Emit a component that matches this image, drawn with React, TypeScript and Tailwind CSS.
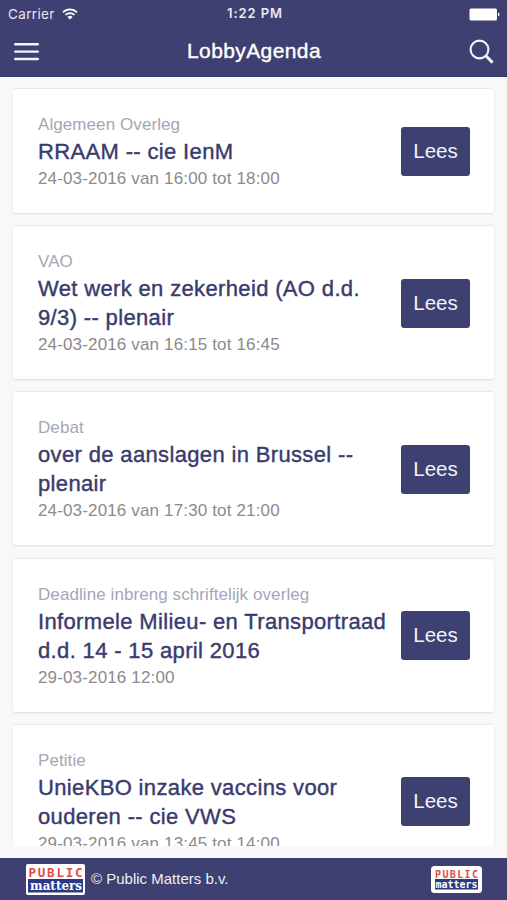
interface AgendaItem {
  kind: string;
  title: string[];
  date: string;
}

const ITEMS: AgendaItem[] = [
  { kind: 'Algemeen Overleg', title: ['RRAAM -- cie IenM'], date: '24-03-2016 van 16:00 tot 18:00' },
  { kind: 'VAO', title: ['Wet werk en zekerheid (AO d.d.', '9/3) -- plenair'], date: '24-03-2016 van 16:15 tot 16:45' },
  { kind: 'Debat', title: ['over de aanslagen in Brussel --', 'plenair'], date: '24-03-2016 van 17:30 tot 21:00' },
  { kind: 'Deadline inbreng schriftelijk overleg', title: ['Informele Milieu- en Transportraad', 'd.d. 14 - 15 april 2016'], date: '29-03-2016 12:00' },
  { kind: 'Petitie', title: ['UnieKBO inzake vaccins voor', 'ouderen -- cie VWS'], date: '29-03-2016 van 13:45 tot 14:00' },
];

function StatusBar() {
  return (
    <div className="grid h-[28px] grid-cols-3 items-center pl-2 pr-[7px] font-['Inter','Liberation_Sans',sans-serif] text-[13.5px] text-[#e8e9f2]">
      <div className="flex items-center gap-[7px]">
        <span className="tracking-[0.35px]">Carrier</span>
        <svg className="h-[12px] w-[16px]" viewBox="0 0 16 12" fill="none" stroke="#fff" strokeWidth="1.7">
          <path d="M1 4.3a10 10 0 0 1 14 0" />
          <path d="M3.5 7a6.4 6.4 0 0 1 9 0" />
          <path d="M8 11.6 5.4 9a3.7 3.7 0 0 1 5.2 0z" fill="#fff" stroke="none" />
        </svg>
      </div>
      <span className="ml-[5px] text-center text-[13px] font-semibold tracking-[0.9px]">
        <span className="-ml-[3px]">1:22 PM</span>
      </span>
      <svg className="h-[13px] w-[31px] justify-self-end" viewBox="0 0 31 13" fill="#fff">
        <rect x="0.5" y="0.5" width="27.5" height="12" rx="1.5" />
        <path d="M29 4.5q1.5.6 1.5 2t-1.5 2z" />
      </svg>
    </div>
  );
}

function Header() {
  return (
    <header className="h-[77px] shrink-0 border-b border-[#353865] bg-[#3d4070] text-white">
      <StatusBar />
      <div className="flex h-[46px] items-center justify-between pl-[14px] pr-[13px]">
        <button aria-label="Menu">
          <svg className="h-[19px] w-[25px]" viewBox="0 0 25 19" stroke="#f4f5fa" strokeWidth="2.4" strokeLinecap="round">
            <path d="M1.2 2.2h22.6M1.2 9.6h22.6M1.2 17h22.6" />
          </svg>
        </button>
        <h1 className="text-[21px] tracking-[0.4px] [-webkit-text-stroke:0.4px_currentColor]">LobbyAgenda</h1>
        <button aria-label="Zoeken">
          <svg className="h-[25px] w-[25px]" viewBox="0 0 25 25" fill="none" stroke="#f4f5fa">
            <circle cx="10.5" cy="10.5" r="8.9" strokeWidth="2.1" />
            <path d="M16.8 16.8 23.6 23.6" strokeWidth="2.9" />
          </svg>
        </button>
      </div>
    </header>
  );
}

function AgendaCard({ item }: { item: AgendaItem }) {
  return (
    <article className="flex shrink-0 items-start justify-between rounded-[3px] bg-white pb-[22px] pl-[25px] pr-6 pt-6 shadow-[0_1px_2px_#dedee0,0_-1px_1px_#e8e8e8]">
      <div className="whitespace-nowrap">
        <p className="text-[17px] leading-6 tracking-[0.08px] text-[#a5a6b7]">{item.kind}</p>
        <h2 className="text-[22px] leading-[29px] tracking-[0.35px] text-[#393b6c] [-webkit-text-stroke:0.4px_currentColor]">
          {item.title.map((line) => (
            <span key={line} className="block">{line}</span>
          ))}
        </h2>
        <p className="text-[17px] leading-[25px] tracking-[0.15px] text-[#8b8b8b]">{item.date}</p>
      </div>
      <button className="-mt-px h-[49px] w-[69px] shrink-0 self-center rounded-[3px] bg-[#3d4070] text-[20.5px] text-[#f3f3f8]">Lees</button>
    </article>
  );
}

function LogoLarge() {
  return (
    <svg className="h-[31px] w-[59px]" viewBox="0 0 59 31">
      <rect width="59" height="31" rx="2" fill="#fff" />
      <rect x="2" y="15" width="55" height="13.5" fill="#2b3a85" />
      <text x="2.5" y="12.8" textLength="54" fontFamily="DejaVu Sans Mono, monospace" fontSize="12.5" fontWeight="700" fill="#e2494c">PUBLIC</text>
      <text x="4" y="26" textLength="52" lengthAdjust="spacingAndGlyphs" fontFamily="DejaVu Serif, serif" fontSize="12" fontWeight="700" fill="#fff">matters</text>
    </svg>
  );
}

function LogoSmall() {
  return (
    <svg className="h-[27px] w-[51px]" viewBox="0 0 51 27">
      <rect width="51" height="27" rx="3.5" fill="#fff" />
      <rect x="4" y="13" width="43" height="10.5" fill="#2b3a85" />
      <text x="4" y="11.5" textLength="43" fontFamily="DejaVu Sans Mono, monospace" fontSize="10" fontWeight="700" fill="#e2494c">PUBLIC</text>
      <text x="4.5" y="21.8" textLength="42" fontFamily="DejaVu Sans Mono, monospace" fontSize="10" fontWeight="700" fill="#fff">matters</text>
    </svg>
  );
}

export default function App() {
  return (
    <div className="flex h-[900px] w-[507px] flex-col overflow-hidden bg-[#f8f8f8] font-['Liberation_Sans',Arial,sans-serif]">
      <Header />
      <main className="flex h-[769px] shrink-0 flex-col gap-[13.2px] overflow-hidden px-[13px] pt-3">
        {ITEMS.map((item) => (
          <AgendaCard key={item.kind} item={item} />
        ))}
      </main>
      <footer className="mt-3 flex flex-1 items-center bg-[#3d4070] pl-[26px] pr-[25px]">
        <LogoLarge />
        <span className="ml-[6px] text-[15px] text-[#eeeef5]">© Public Matters b.v.</span>
        <div className="ml-auto">
          <LogoSmall />
        </div>
      </footer>
    </div>
  );
}
